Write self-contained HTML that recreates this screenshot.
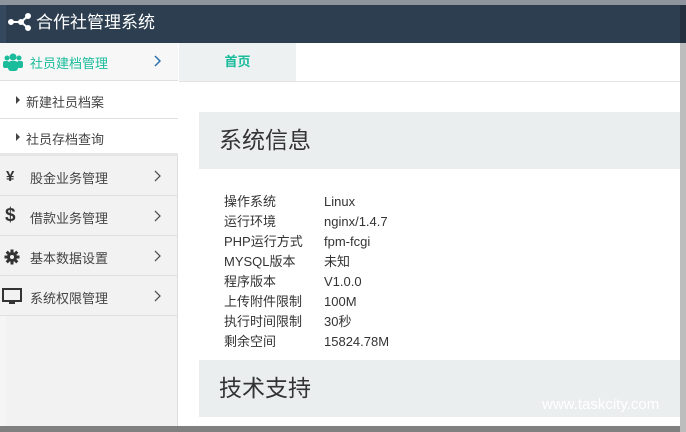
<!DOCTYPE html><html><head><meta charset="utf-8"><style>
*{margin:0;padding:0;box-sizing:border-box}
body{width:686px;height:432px;overflow:hidden;position:relative;background:#fff;font-family:"Liberation Sans","Noto Sans CJK SC",sans-serif;font-size:13px;color:#333}
.hdr{position:absolute;left:0;top:0;width:686px;height:43px;background:#2c3e50}
.hdr .t{position:absolute;left:36px;top:8px;color:#fff;font-size:17px}
.side{position:absolute;left:0;top:43px;width:178px;height:389px;background:#f2f2f2;border-right:1px solid #ddd}
.it{position:absolute;left:0;width:178px;border-bottom:1px solid #e0e0e0;font-size:13px;color:#444}
.it span{position:absolute;left:30px}
.arr{position:absolute;left:153px}
.tabbar{position:absolute;left:179px;top:43px;width:507px;height:39px;border-bottom:1px solid #e2e2e2}
.tab{position:absolute;left:0;top:0;width:117px;height:38px;background:#eef1f1;color:#1abc9c;text-align:center;line-height:38px;font-size:13px;font-weight:bold}
.box{position:absolute;left:199px;width:487px;height:57px;background:#eaeeef;font-size:23px;color:#333;padding-left:20px;line-height:57px}
.row{position:absolute;left:224px;font-size:13px;color:#333}
.row b{font-weight:normal;display:inline-block;width:100px}
</style></head><body>
<div class="hdr">
<svg style="position:absolute;left:8px;top:12px" width="24" height="20" viewBox="0 0 24 20"><g fill="#fff" stroke="#fff" stroke-width="2"><line x1="3" y1="10" x2="13" y2="10"/><line x1="13" y1="10" x2="20" y2="4"/><line x1="13" y1="10" x2="20" y2="16"/><circle cx="3" cy="10" r="2"/><circle cx="13" cy="10" r="2"/><circle cx="20" cy="4" r="2"/><circle cx="20" cy="16" r="2"/></g></svg>
<div class="t">合作社管理系统</div></div>
<div class="side">
<div class="it" style="top:0;height:38px;background:#f7f7f7"><svg style="position:absolute;left:3px;top:10px" width="20" height="18" viewBox="0 0 20 18"><g fill="#1abc9c"><circle cx="10" cy="4" r="3.5"/><circle cx="4" cy="5" r="2.5"/><circle cx="16" cy="5" r="2.5"/><rect x="5" y="8" width="10" height="10" rx="3"/><rect x="0" y="8" width="6" height="7" rx="2"/><rect x="14" y="8" width="6" height="7" rx="2"/></g></svg><span style="top:10px;color:#1abc9c">社员建档管理</span><svg class="arr" style="top:12px" width="8" height="12" viewBox="0 0 8 12"><path d="M2 1l5 5-5 5" fill="none" stroke="#2a6fb0" stroke-width="1.5"/></svg></div>
<div class="it" style="top:38px;height:38px;background:#fff"><i style="position:absolute;left:16px;top:15px;border-left:4px solid #444;border-top:4px solid transparent;border-bottom:4px solid transparent"></i><span style="left:26px;top:11px">新建社员档案</span></div>
<div class="it" style="top:76px;height:37px;background:#fff;border-bottom:3px solid #e6e6e6"><i style="position:absolute;left:16px;top:14px;border-left:4px solid #444;border-top:4px solid transparent;border-bottom:4px solid transparent"></i><span style="left:26px;top:10px">社员存档查询</span></div>
<div class="it" style="top:113px;height:40px"><b style="position:absolute;left:6px;top:12px;font-size:15px;color:#333">¥</b><span style="top:12px">股金业务管理</span><svg class="arr" style="top:14px" width="8" height="12" viewBox="0 0 8 12"><path d="M2 1l5 5-5 5" fill="none" stroke="#555" stroke-width="1.3"/></svg></div>
<div class="it" style="top:153px;height:40px"><b style="position:absolute;left:5px;top:9px;font-size:19px;color:#333">$</b><span style="top:12px">借款业务管理</span><svg class="arr" style="top:14px" width="8" height="12" viewBox="0 0 8 12"><path d="M2 1l5 5-5 5" fill="none" stroke="#555" stroke-width="1.3"/></svg></div>
<div class="it" style="top:193px;height:40px"><svg style="position:absolute;left:4px;top:13px" width="16" height="16" viewBox="0 0 16 16"><g fill="#333"><circle cx="8" cy="8" r="5"/><rect x="6.5" y="0.5" width="3" height="15"/><rect x="0.5" y="6.5" width="15" height="3"/><rect x="6.5" y="0.5" width="3" height="15" transform="rotate(45 8 8)"/><rect x="6.5" y="0.5" width="3" height="15" transform="rotate(-45 8 8)"/></g><circle cx="8" cy="8" r="2" fill="#f2f2f2"/></svg><span style="top:12px">基本数据设置</span><svg class="arr" style="top:14px" width="8" height="12" viewBox="0 0 8 12"><path d="M2 1l5 5-5 5" fill="none" stroke="#555" stroke-width="1.3"/></svg></div>
<div class="it" style="top:233px;height:40px"><svg style="position:absolute;left:2px;top:12px" width="20" height="17" viewBox="0 0 20 17"><rect x="1" y="1" width="18" height="12" fill="none" stroke="#333" stroke-width="2"/><rect x="7" y="13" width="6" height="3" fill="#333"/></svg><span style="top:12px">系统权限管理</span><svg class="arr" style="top:14px" width="8" height="12" viewBox="0 0 8 12"><path d="M2 1l5 5-5 5" fill="none" stroke="#555" stroke-width="1.3"/></svg></div>
</div>
<div class="tabbar"><div class="tab">首页</div></div>
<div class="box" style="top:112px">系统信息</div>
<div class="row" style="top:191px"><b>操作系统</b>Linux</div>
<div class="row" style="top:211px"><b>运行环境</b>nginx/1.4.7</div>
<div class="row" style="top:231px"><b>PHP运行方式</b>fpm-fcgi</div>
<div class="row" style="top:251px"><b>MYSQL版本</b>未知</div>
<div class="row" style="top:271px"><b>程序版本</b>V1.0.0</div>
<div class="row" style="top:291px"><b>上传附件限制</b>100M</div>
<div class="row" style="top:311px"><b>执行时间限制</b>30秒</div>
<div class="row" style="top:331px"><b>剩余空间</b>15824.78M</div>
<div class="box" style="top:360px">技术支持</div>
<div style="position:absolute;left:542px;top:396px;color:#fff;font-size:15px">www.taskcity.com</div>
<div style="position:absolute;left:0;top:0;width:686px;height:5px;background:#8f959d"></div>
<div style="position:absolute;left:0;top:5px;width:6px;height:38px;background:#34495e"></div>
<div style="position:absolute;left:0;top:316px;width:6px;height:110px;background:#f5f5f5"></div>
<div style="position:absolute;right:0;top:5px;width:6px;height:38px;background:#24303d"></div>
<div style="position:absolute;right:0;top:43px;width:6px;height:389px;background:#bdbdbd"></div>
<div style="position:absolute;left:0;bottom:0;width:680px;height:6px;background:#808080"></div>
</body></html>
